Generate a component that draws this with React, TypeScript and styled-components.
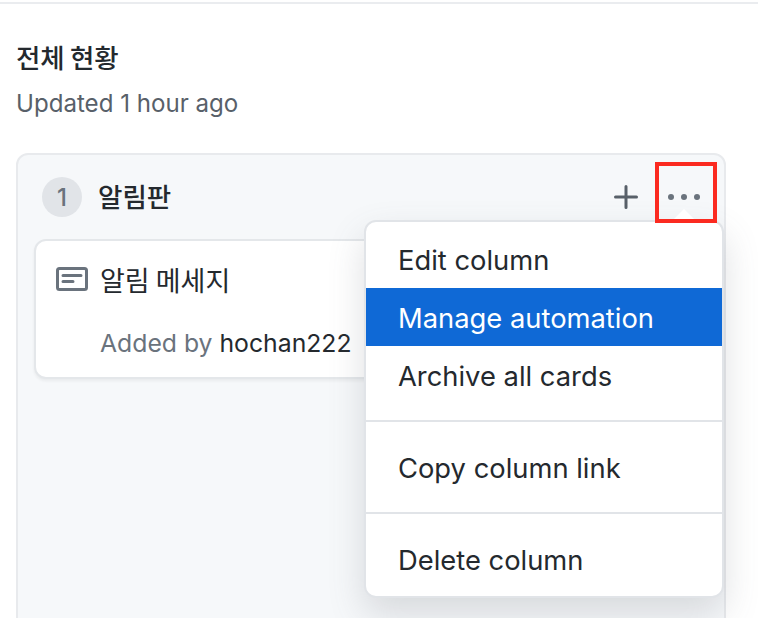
import React from "react";
import styled, { createGlobalStyle } from "styled-components";

const Global = createGlobalStyle`
  html, body { margin: 0; padding: 0; background: #fff; height: 618px; overflow: hidden; }
  body { font-family: Inter, "Noto Sans CJK KR", sans-serif; color: #24292e; -webkit-font-smoothing: antialiased; }
`;

const Page = styled.div`
  position: relative;
  width: 758px;
  height: 618px;
  overflow: hidden;
  padding-top: 2px;
  box-sizing: border-box;
`;
const TopRule = styled.div`
  height: 2px;
  background: #eaecef;
`;
const Content = styled.main`
  padding: 36px 32px 0 16px;
`;
const Title = styled.h1`
  margin: 0;
  font-size: 26.5px;
  line-height: 34px;
  font-weight: 500;
  color: #24292e;
  font-family: "Noto Sans CJK KR", sans-serif;
  letter-spacing: -0.2px;
`;
const Updated = styled.p`
  margin: 16px 0 0;
  font-size: 24.1px;
  line-height: 28px;
  color: #586069;
`;
const Column = styled.section`
  position: relative;
  margin-top: 35px;
  height: 520px;
  box-sizing: border-box;
  border: 2px solid #e8eaed;
  border-radius: 12px;
  background: #f6f8fa;
  padding: 20px 16px 0;
`;
const ColumnHead = styled.header`
  display: flex;
  align-items: center;
  height: 40px;
  padding-left: 8px;
  margin-top: 2px;
`;
const Count = styled.span`
  width: 40px;
  height: 40px;
  border-radius: 50%;
  background: #e1e4e8;
  color: #6a737d;
  display: flex;
  align-items: center;
  justify-content: center;
  font-size: 24px;
  font-weight: 500;
`;
const ColumnName = styled.h2`
  margin: -2px 0 0 16px;
  font-size: 26.5px;
  line-height: 40px;
  font-weight: 500;
  font-family: "Noto Sans CJK KR", sans-serif;
  color: #24292e;
`;
const HeadActions = styled.div`
  margin-left: auto;
  display: flex;
  align-items: center;
  gap: 18px;
  padding-right: 4px;
`;
const IconButton = styled.button`
  width: 40px;
  height: 40px;
  padding: 0;
  border: 0;
  background: none;
  display: flex;
  align-items: center;
  justify-content: center;
`;
const Card = styled.article`
  margin-top: 22px;
  width: 660px;
  height: 140px;
  box-sizing: border-box;
  background: #fff;
  border: 2px solid #e4e7ea;
  border-radius: 12px;
  box-shadow: 0 2px 3px rgba(27, 31, 35, 0.06);
  padding: 19px 20px 0;
`;
const CardTitle = styled.div`
  display: flex;
  align-items: center;
  gap: 12px;
  height: 38px;
  font-size: 27px;
  font-family: "Noto Sans CJK KR", sans-serif;
  color: #24292e;
`;
const CardMeta = styled.div`
  margin-top: 30px;
  margin-left: 44px;
  font-size: 24.75px;
  line-height: 30px;
  color: #6a737d;
`;
const Author = styled.span`
  color: #24292e;
`;
const Menu = styled.div`
  position: absolute;
  left: 346px;
  top: 65px;
  width: 360px;
  box-sizing: border-box;
  padding: 8px 0 8px;
  background: #fff;
  border: 2px solid #e1e4e8;
  border-radius: 12px;
  box-shadow: 0 16px 36px rgba(88, 96, 105, 0.2);
`;
const Caret = styled.div`
  position: absolute;
  top: -13px;
  right: 24px;
  width: 0;
  height: 0;
  border-left: 14px solid transparent;
  border-right: 14px solid transparent;
  border-bottom: 14px solid #fff;
`;
const MenuItem = styled.div<{ $active?: boolean }>`
  height: 58px;
  box-sizing: border-box;
  padding: 2px 0 0 32px;
  display: flex;
  align-items: center;
  font-size: 27.35px;
  background: ${(p) => (p.$active ? "#0f69d6" : "transparent")};
  color: ${(p) => (p.$active ? "#fff" : "#24292e")};
`;
const Divider = styled.hr`
  margin: 16px 0;
  border: 0;
  height: 2px;
  background: #e1e4e8;
`;
const Highlight = styled.div`
  position: absolute;
  left: 655px;
  top: 162px;
  width: 62px;
  height: 61px;
  box-sizing: border-box;
  border: 4px solid #fb2a20;
`;

export default function App() {
  return (
    <Page>
      <Global />
      <TopRule />
      <Content>
        <Title>전체 현황</Title>
        <Updated>Updated 1 hour ago</Updated>
        <Column>
          <ColumnHead>
            <Count>1</Count>
            <ColumnName>알림판</ColumnName>
            <HeadActions>
              <IconButton aria-label="Add card">
                <svg width="24" height="24" viewBox="0 0 24 24" fill="none" stroke="#586069" strokeWidth="3" strokeLinecap="round">
                  <path d="M12 1.5v21M1.5 12h21" />
                </svg>
              </IconButton>
              <IconButton aria-label="Column menu">
                <svg width="36" height="8" viewBox="0 0 36 8" fill="#6a737d">
                  <circle cx="5" cy="4" r="3" />
                  <circle cx="18" cy="4" r="3" />
                  <circle cx="31" cy="4" r="3" />
                </svg>
              </IconButton>
            </HeadActions>
          </ColumnHead>
          <Card>
            <CardTitle>
              <svg width="32" height="24" viewBox="0 0 32 24" fill="none" stroke="#6a737d" strokeWidth="3" strokeLinejoin="round">
                <rect x="1.5" y="1.5" width="29" height="21" rx="2" />
                <path d="M7 8.5h18M7 14.5h10" strokeLinecap="round" />
              </svg>
              알림 메세지
            </CardTitle>
            <CardMeta>
              Added by <Author>hochan222</Author>
            </CardMeta>
          </Card>
          <Menu>
            <Caret />
            <MenuItem>Edit column</MenuItem>
            <MenuItem $active>Manage automation</MenuItem>
            <MenuItem>Archive all cards</MenuItem>
            <Divider />
            <MenuItem>Copy column link</MenuItem>
            <Divider />
            <MenuItem>Delete column</MenuItem>
          </Menu>
        </Column>
      </Content>
      <Highlight />
    </Page>
  );
}
